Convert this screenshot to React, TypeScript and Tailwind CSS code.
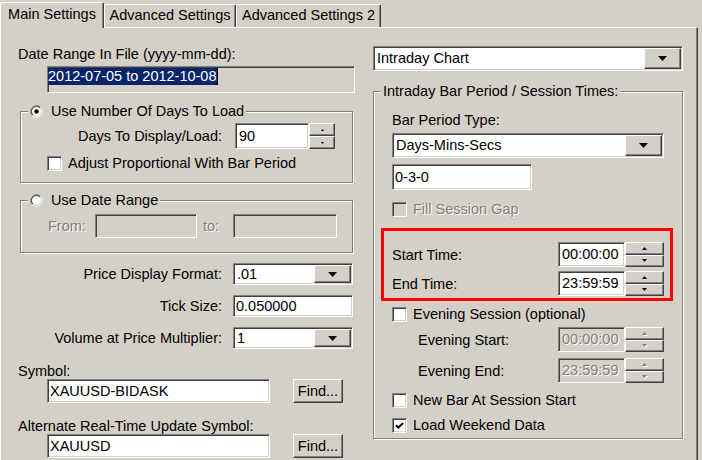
import React from "react";

// classic 3D borders
const sunken =
  "border border-t-[#808080] border-l-[#808080] border-b-white border-r-white shadow-[inset_1px_1px_0_#404040,inset_-1px_-1px_0_#d4d0c8]";
const raised =
  "border border-t-white border-l-white border-b-[#404040] border-r-[#404040] shadow-[inset_-1px_-1px_0_#808080]";
const etched = "border border-[#808080] shadow-[inset_1px_1px_0_#fff,1px_1px_0_#fff]";
const dim = "text-[#808080] [text-shadow:1px_1px_0_#fff]";

type ArrowProps = { dir: "up" | "down"; w: number; h: number; disabled?: boolean };

function Arrow({ dir, w, h, disabled }: ArrowProps) {
  const d = dir === "down" ? `M0 0H${w}L${w / 2} ${h}Z` : `M0 ${h}H${w}L${w / 2} 0Z`;
  return (
    <svg width={w} height={h} viewBox={`0 0 ${w} ${h}`} className={disabled ? "drop-shadow-[1px_1px_0_#fff]" : ""}>
      <path d={d} fill={disabled ? "#808080" : "#000"} />
    </svg>
  );
}

function Radio({ checked }: { checked?: boolean }) {
  return (
    <svg width="13" height="13" viewBox="0 0 13 13" className="shrink-0">
      <circle cx="6.5" cy="6.5" r="4.6" fill="#fff" />
      <path d="M2.26 10.74A6 6 0 0 1 10.74 2.26" stroke="#808080" fill="none" />
      <path d="M10.74 2.26A6 6 0 0 1 2.26 10.74" stroke="#fff" fill="none" />
      <path d="M2.96 10.04A5 5 0 0 1 10.04 2.96" stroke="#404040" fill="none" />
      <path d="M10.04 2.96A5 5 0 0 1 2.96 10.04" stroke="#d4d0c8" fill="none" />
      {checked && <circle cx="6.5" cy="6.5" r="2.2" fill="#000" />}
    </svg>
  );
}

function Check({ checked, disabled }: { checked?: boolean; disabled?: boolean }) {
  return (
    <div className={`w-[15px] h-[15px] shrink-0 ${sunken} ${disabled ? "bg-[#d4d0c8]" : "bg-white"} flex items-center justify-center`}>
      {checked && (
        <svg width="9" height="9" viewBox="0 0 9 9">
          <path d="M1 4.2L3.4 6.6L8 2" stroke="#000" strokeWidth="2" fill="none" />
        </svg>
      )}
    </div>
  );
}

function CheckRow({ label, checked, disabled, className }: { label: string; checked?: boolean; disabled?: boolean; className: string }) {
  return (
    <div className={`h-[17px] flex items-center ${className}`}>
      <Check checked={checked} disabled={disabled} />
      <span className={`ml-[6px] leading-[17px] ${disabled ? dim : ""}`}>{label}</span>
    </div>
  );
}

function Combo({ value, className }: { value: string; className: string }) {
  return (
    <div className={`flex p-px bg-white ${sunken} ${className}`}>
      <div className="flex-1 flex items-center pl-[2px] leading-none">{value}</div>
      <div className={`w-[37px] ${raised} bg-[#d4d0c8] flex items-center justify-center`}>
        <Arrow dir="down" w={9} h={5} />
      </div>
    </div>
  );
}

function Field({ value, className, disabled }: { value?: string; className: string; disabled?: boolean }) {
  return (
    <div className={`flex items-center pl-[2px] leading-none ${sunken} ${disabled ? "bg-[#d4d0c8]" : "bg-white"} ${className}`}>
      {value}
    </div>
  );
}

function Spinner({ value, disabled, small, className }: { value: string; disabled?: boolean; small?: boolean; className: string }) {
  return (
    <div className={`flex ${className}`}>
      <div
        className={`flex-1 flex items-center pl-[3px] leading-none ${sunken} ${disabled ? `bg-[#d4d0c8] ${dim}` : "bg-white"}`}
      >
        {value}
      </div>
      <div className={`${small ? "w-[26px]" : "w-[39px]"} flex flex-col`}>
        <div className={`flex-1 ${raised} bg-[#d4d0c8] flex items-center justify-center`}>
          <Arrow dir="up" w={small ? 3 : 5} h={small ? 2 : 3} disabled={disabled} />
        </div>
        <div className={`flex-1 ${raised} bg-[#d4d0c8] flex items-center justify-center`}>
          <Arrow dir="down" w={small ? 3 : 5} h={small ? 2 : 3} disabled={disabled} />
        </div>
      </div>
    </div>
  );
}

function Button({ label, className }: { label: string; className: string }) {
  return <div className={`${raised} bg-[#d4d0c8] flex items-center justify-center leading-none ${className}`}>{label}</div>;
}

function Tab({ label, className }: { label: string; className: string }) {
  return (
    <div
      className={`h-[23px] border-t border-l border-r border-t-white border-l-white border-r-[#404040] shadow-[inset_-1px_0_0_#808080] rounded-t-[2px] flex justify-center pt-[2px] leading-[17px] ${className}`}
    >
      {label}
    </div>
  );
}

function Legend({ children, className }: { children: React.ReactNode; className: string }) {
  return <div className={`-mt-[9px] w-fit h-[17px] px-[2px] bg-[#d4d0c8] flex items-center leading-[17px] ${className}`}>{children}</div>;
}

function LeftColumn() {
  return (
    <div className="ml-[17px] w-[338px] flex flex-col">
      <div className="mt-[19px] h-[14px] leading-[14px]">Date Range In File (yyyy-mm-dd):</div>
      <div className={`mt-[5px] ml-[29px] w-[308px] h-[27px] ${sunken} flex items-start pt-px`}>
        <span className="bg-[#0a246a] text-white leading-[17px]">2012-07-05 to 2012-10-08</span>
        <span className="w-px h-[17px] bg-black" />
      </div>

      <div className={`mt-[18px] ml-[2px] w-[333px] ${etched} flex flex-col pb-[10px]`}>
        <Legend className="ml-[7px]">
          <Radio checked />
          <span className="ml-[8px]">Use Number Of Days To Load</span>
        </Legend>
        <div className="mt-[3px] h-[26px] flex items-center">
          <div className="w-[201px] text-right leading-[14px]">Days To Display/Load:</div>
          <Spinner value="90" small className="ml-[13px] w-[100px] h-full" />
        </div>
        <CheckRow className="mt-[6px] ml-[26px]" label="Adjust Proportional With Bar Period" />
      </div>

      <div className={`mt-[17px] ml-[2px] w-[333px] ${etched} flex flex-col pb-[14px]`}>
        <Legend className="ml-[7px]">
          <Radio />
          <span className="ml-[8px]">Use Date Range</span>
        </Legend>
        <div className="mt-[5px] h-[24px] flex items-center">
          <span className={`ml-[27px] w-[47px] leading-[14px] ${dim}`}>From:</span>
          <Field disabled className="w-[102px] h-full" />
          <span className={`ml-[6px] w-[30px] leading-[14px] ${dim}`}>to:</span>
          <Field disabled className="w-[104px] h-full" />
        </div>
      </div>

      <div className="mt-[10px] h-[22px] flex items-center">
        <div className="w-[204px] text-right leading-[14px]">Price Display Format:</div>
        <Combo value=".01" className="ml-[11px] w-[120px] h-full" />
      </div>
      <div className="mt-[10px] h-[22px] flex items-center">
        <div className="w-[204px] text-right leading-[14px]">Tick Size:</div>
        <Field value="0.050000" className="ml-[11px] w-[120px] h-full" />
      </div>
      <div className="mt-[10px] h-[22px] flex items-center">
        <div className="w-[204px] text-right leading-[14px]">Volume at Price Multiplier:</div>
        <Combo value="1" className="ml-[11px] w-[120px] h-full" />
      </div>

      <div className="mt-[15px] h-[14px] leading-[14px]">Symbol:</div>
      <div className="mt-px h-[24px] flex">
        <Field value="XAUUSD-BIDASK" className="ml-[29px] w-[223px] h-full" />
        <Button label="Find..." className="ml-[23px] w-[50px] h-full" />
      </div>
      <div className="mt-[16px] h-[14px] leading-[14px]">Alternate Real-Time Update Symbol:</div>
      <div className="mt-px h-[24px] flex">
        <Field value="XAUUSD" className="ml-[29px] w-[223px] h-full" />
        <Button label="Find..." className="ml-[23px] w-[50px] h-full" />
      </div>
    </div>
  );
}

function RightColumn() {
  return (
    <div className="ml-[17px] w-[311px] flex flex-col">
      <Combo value="Intraday Chart" className="mt-[18px] w-[310px] h-[25px]" />

      <div className={`mt-[20px] w-[310px] ${etched} flex flex-col pb-[4px]`}>
        <Legend className="ml-[7px]">Intraday Bar Period / Session Times:</Legend>
        <div className="mt-[13px] ml-[18px] h-[14px] leading-[14px]">Bar Period Type:</div>
        <Combo value="Days-Mins-Secs" className="mt-[6px] ml-[18px] w-[272px] h-[25px]" />
        <Field value="0-3-0" className="mt-[6px] ml-[18px] w-[140px] h-[26px]" />
        <CheckRow className="mt-[11px] ml-[18px]" label="Fill Session Gap" disabled />

        {/* highlighted session times */}
        <div className="mt-[10px] ml-[7px] w-[292px] border-[3px] border-[#ff0000] flex flex-col pt-[11px] pb-[2px] pl-[8px] pr-[6px] gap-[4px]">
          <div className="h-[25px] flex items-center justify-between">
            <span className="leading-[14px]">Start Time:</span>
            <Spinner value="00:00:00" className="w-[106px] h-full" />
          </div>
          <div className="h-[25px] flex items-center justify-between">
            <span className="leading-[14px]">End Time:</span>
            <Spinner value="23:59:59" className="w-[106px] h-full" />
          </div>
        </div>

        <CheckRow className="mt-[5px] ml-[18px]" label="Evening Session (optional)" />
        <div className="mt-[4px] ml-[44px] w-[246px] h-[25px] flex items-center justify-between">
          <span className="leading-[14px]">Evening Start:</span>
          <Spinner value="00:00:00" disabled className="w-[106px] h-full" />
        </div>
        <div className="mt-[6px] ml-[44px] w-[246px] h-[25px] flex items-center justify-between">
          <span className="leading-[14px]">Evening End:</span>
          <Spinner value="23:59:59" disabled className="w-[106px] h-full" />
        </div>
        <CheckRow className="mt-[9px] ml-[18px]" label="New Bar At Session Start" />
        <CheckRow className="mt-[8px] ml-[18px]" label="Load Weekend Data" checked />
      </div>
    </div>
  );
}

export default function App() {
  return (
    <div className="w-[702px] h-[460px] overflow-hidden bg-[#d4d0c8] text-black text-[14.5px] font-['Liberation_Sans',Arial,sans-serif]">
      <div className="h-[27px] flex items-end">
        <div className="relative z-10 w-[104px] h-[26px] -mb-px bg-[#d4d0c8] border-t border-l border-r border-t-white border-l-white border-r-[#404040] shadow-[inset_-1px_0_0_#808080] rounded-t-[2px] flex justify-center pt-[3px] leading-[17px]">
          Main Settings
        </div>
        <Tab label="Advanced Settings" className="w-[132px]" />
        <Tab label="Advanced Settings 2" className="w-[145px]" />
      </div>
      <div className="w-[698px] h-[433px] border-t border-l border-r border-t-white border-l-white border-r-[#404040] shadow-[inset_-1px_0_0_#808080] flex">
        <LeftColumn />
        <RightColumn />
      </div>
    </div>
  );
}
